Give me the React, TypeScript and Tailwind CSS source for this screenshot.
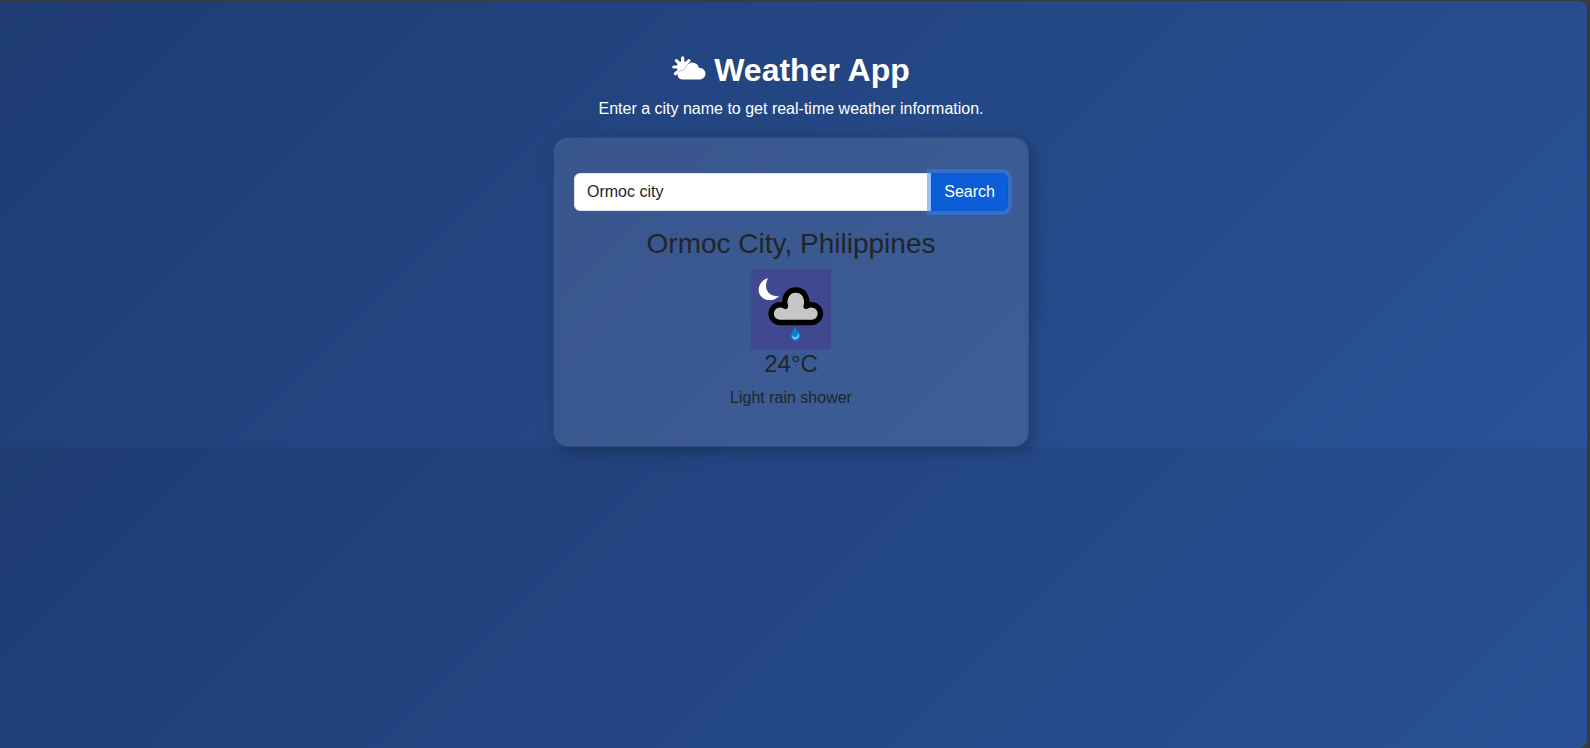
import { useState } from "react";

function CloudSunIcon() {
  return (
    <svg className="mb-1 h-6 w-[34px]" viewBox="0 0 34 24" fill="none" aria-hidden="true">
      <g stroke="#fff" strokeWidth="3.2" strokeLinecap="round">
        <path d="M10.7 1.8V5M4.400 4.600l2.200 2.200M17 4.600l-2.200 2.200M1.800 11H5M3.400 17.800l2.400-2M17 10.500h1.500" />
      </g>
      <circle cx="10.7" cy="11" r="5.9" fill="#fff" />
      <path
        d="M11 23.600C8 23.600 5.600 21.700 5.600 19c0-2.700 2.200-4.600 5-4.600C11.600 14.400 12.600 13.600 13.400 12 14.600 8.700 17 6.600 20.200 6.600c3.500 0 5.900 2.100 6.700 5.100 3.800.1 6.600 2.400 6.600 5.900 0 3.500-2.600 6-6.200 6Z"
        fill="#fff"
      />
      <path d="M6.600 16.300c1-1.400 2.400-1.900 4-1.900 1 0 2-.8 2.800-2.400 1.200-3.100 3-4.700 5.400-5.300" stroke="#7f94bd" strokeWidth=".6" />
    </svg>
  );
}

function LightRainNightIcon() {
  return (
    <svg className="block size-20 bg-[#40488f]" viewBox="0 0 80 80" role="img" aria-label="Light rain shower">
      <path d="M17 9C5 13 4 29 17 31c4 .6 8-.5 11-4C17 28.500 12 19 17 9Z" fill="#fff" />
      <path
        d="M29 53.500a8.900 8.900 0 0 1 0-17.800c2.200 0 4 .6 5.400 1.700C32.200 28 37 21 44.800 21s12.600 7 10.400 16.400C56.600 36.300 58.500 35.700 60.500 35.700a8.900 8.900 0 0 1 0 17.800Z"
        fill="#c6c6c6"
        stroke="#000"
        strokeWidth="5.4"
        strokeLinejoin="round"
      />
      <path d="M43.500 58c1.500 3 6 5 6 9a5 5 0 0 1-10 0c0-3 3.500-5 4-9Z" fill="#0b7fd8" />
      <path d="M41.500 66c1 2 2 2.500 3.500 2L48 64.500c.7 3-1.500 6-4 6S41 68 41.500 66Z" fill="#6cc4f5" />
    </svg>
  );
}

export default function App() {
  const [city, setCity] = useState("Ormoc city");

  return (
    <div className="min-h-screen bg-[#3a3a3a] pt-px pr-[3px] font-['Liberation_Sans',Arial,sans-serif] text-[#212529]">
      <div className="min-h-[747px] rounded-r-lg bg-[linear-gradient(135deg,#1e3c72,#2a5298)] bg-[length:100%_446px] pt-[50px] pr-[5px]">
        <header className="flex flex-col items-center px-4 text-center text-white">
          <h1 className="flex items-center gap-2 text-[32px] leading-[38px] font-bold">
            <CloudSunIcon />
            Weather App
          </h1>
          <p className="mt-2 leading-6">Enter a city name to get real-time weather information.</p>
        </header>
        <main className="mx-auto mt-4 w-full max-w-[476px] rounded-[15px] border border-black/15 bg-white/10 px-5 pt-[35px] pb-9 shadow-[4px_4px_16px_rgba(0,0,0,0.25)]">
          <form className="flex" onSubmit={(e) => e.preventDefault()}>
            <input
              type="text"
              aria-label="City name"
              value={city}
              onChange={(e) => setCity(e.target.value)}
              className="h-[38px] min-w-0 flex-1 rounded-l-md border border-[#dee2e6] bg-white px-3 leading-6 outline-none"
            />
            <button
              type="submit"
              className="relative -ml-px h-[38px] rounded-r-md border border-[#0a58ca] bg-[#0b5ed7] px-3 leading-6 text-white shadow-[0_0_0_4px_rgba(49,132,253,0.5)]"
            >
              Search
            </button>
          </form>
          <section className="mt-4 flex flex-col items-center text-center">
            <h2 className="mb-2 text-[28px] leading-[34px]">Ormoc City, Philippines</h2>
            <LightRainNightIcon />
            <p className="mb-2 text-2xl leading-[29px]">24°C</p>
            <p className="leading-6">Light rain shower</p>
          </section>
        </main>
      </div>
    </div>
  );
}
